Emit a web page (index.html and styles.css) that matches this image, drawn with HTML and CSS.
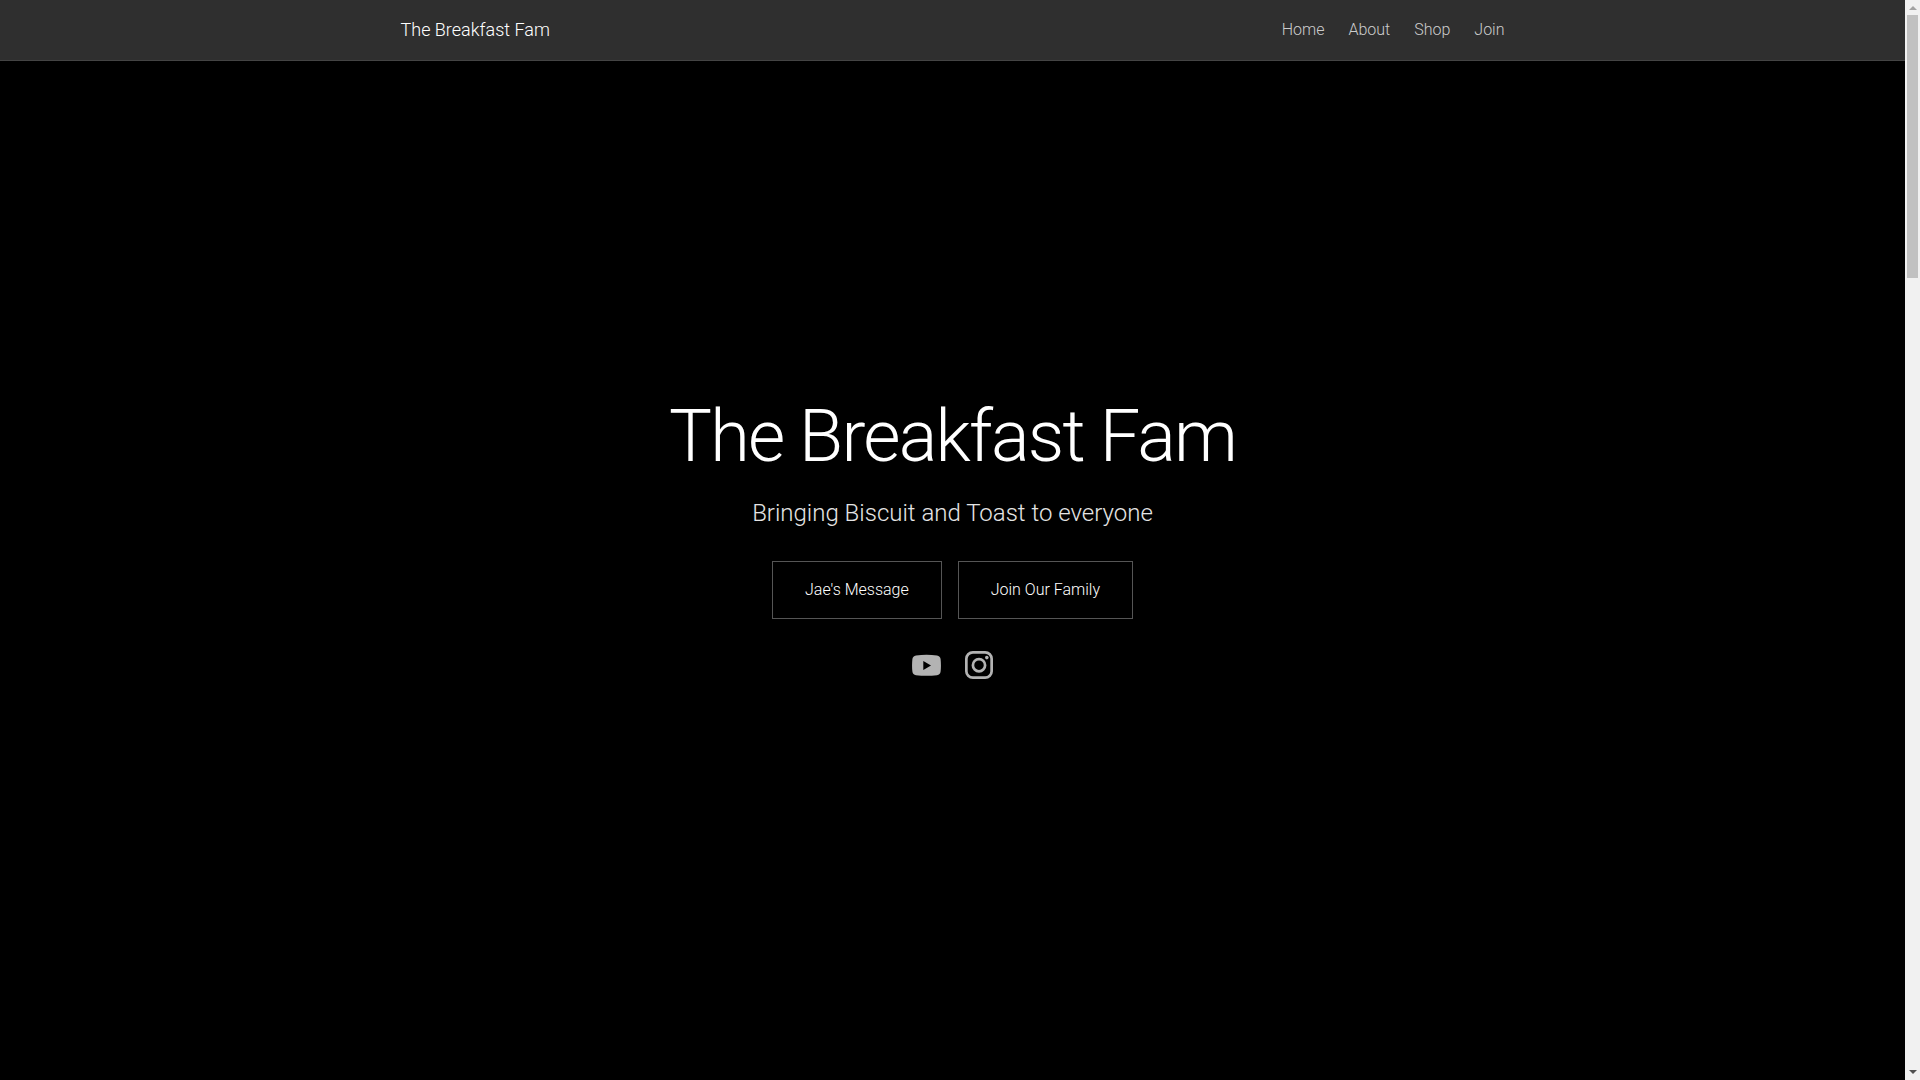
FILE: index.html
```html
<!DOCTYPE html>
<html lang="en">
<head>
    <meta charset="UTF-8">
    <meta name="viewport" content="width=device-width, initial-scale=1.0">
    <title>The Breakfast Fam</title>
    <link rel="stylesheet" href="styles.css">
</head>
<body>

    <div class="page">
        <header class="navbar">
            <div class="container">
                <a class="logo" href="#home">The Breakfast Fam</a>
                <nav class="nav-links">
                    <a href="#home">Home</a>
                    <a href="#about">About</a>
                    <a href="#shop">Shop</a>
                    <a href="#join">Join</a>
                </nav>
            </div>
        </header>

        <main class="hero" id="home">
            <h1>The Breakfast Fam</h1>
            <p class="tagline">Bringing Biscuit and Toast to everyone</p>
            <div class="hero-buttons">
                <a class="btn" href="#message">Jae's Message</a>
                <a class="btn" href="#join">Join Our Family</a>
            </div>
            <div class="socials">
                <a href="#youtube" aria-label="YouTube">
                    <svg viewBox="0 0 29 28" width="29" height="28">
                        <path fill="currentColor" fill-rule="evenodd" d="M4 4.500Q14.500 3.200 25 4.500Q28.200 5 28.600 8Q29.300 14.500 28.600 20.500Q28.200 23.700 25 24.200Q14.500 25.400 4 24.200Q.8 23.700 .4 20.500Q-.3 14.500 .4 8Q.8 5 4 4.500ZM11.300 10V19L19 14.500Z"/>
                    </svg>
                </a>
                <a href="#instagram" aria-label="Instagram">
                    <svg viewBox="0 0 28 28" width="28" height="28" fill="none" stroke="currentColor" stroke-width="2.700">
                        <rect x="1.350" y="1.350" width="25.300" height="25.300" rx="6.500"/>
                        <circle cx="14" cy="14.200" r="6.100"/>
                        <circle cx="21.800" cy="6.600" r="1.800" fill="currentColor" stroke="none"/>
                    </svg>
                </a>
            </div>
        </main>
    </div>

    <!-- Page scrollbar -->
    <div class="scrollbar" aria-hidden="true">
        <span class="arrow arrow-up"></span>
        <div class="track"><div class="thumb"></div></div>
        <span class="arrow arrow-down"></span>
    </div>

</body>
</html>
```
FILE: styles.css
```css
* { margin: 0; padding: 0; box-sizing: border-box; }
body {
    display: flex;
    min-height: 100vh;
    background: #000;
    color: #fff;
    font-family: Roboto, sans-serif;
    font-size: 16px;
    font-weight: 300;
    line-height: 24px;
}
a {
    color: inherit;
    text-decoration: none;
}
.page {
    flex: 1;
    display: flex;
    flex-direction: column;
}

/* Header */
.navbar {
    background: #2f2f2f;
    border-bottom: 1px solid #444;
}
.container {
    display: flex;
    justify-content: space-between;
    align-items: center;
    max-width: 1200px;
    height: 60px;
    margin: 0 auto;
    padding: 0 48px;
}
.logo {
    font-size: 18px;
    color: #fff;
}
.nav-links {
    display: flex;
    gap: 24px;
    color: #ccc;
}
.nav-links a:hover {
    color: #fff;
}

/* Hero */
.hero {
    flex: 1;
    display: flex;
    flex-direction: column;
    align-items: center;
    justify-content: center;
    padding-bottom: 61px;
    text-align: center;
}
h1 {
    font-size: 72px;
    font-weight: 300;
    line-height: 72px;
    letter-spacing: -0.025em;
    margin-bottom: 24px;
}
.tagline {
    font-size: 24px;
    line-height: 32px;
    color: #e5e5e5;
    margin-bottom: 32px;
}
.hero-buttons {
    display: flex;
    gap: 16px;
    margin-bottom: 32px;
}
.btn {
    padding: 16px 32px;
    border: 1px solid #555;
}
.btn:hover {
    background: #2f2f2f;
}
.socials {
    display: flex;
    gap: 24px;
    color: #b3b3b3;
}
.socials svg {
    display: block;
}

/* Scrollbar */
.scrollbar {
    display: flex;
    flex-direction: column;
    align-items: center;
    width: 15px;
    padding: 6px 2px;
    background: #f1f1f1;
}
.track {
    flex: 1;
    width: 11px;
    margin: 5px 0;
}
.thumb {
    height: 25%;
    background: #c1c1c1;
}
.arrow {
    border: 4px solid transparent;
}
.arrow-up {
    border-top: 0;
    border-bottom-color: #a3a3a3;
}
.arrow-down {
    border-bottom: 0;
    border-top-color: #505050;
}
```
